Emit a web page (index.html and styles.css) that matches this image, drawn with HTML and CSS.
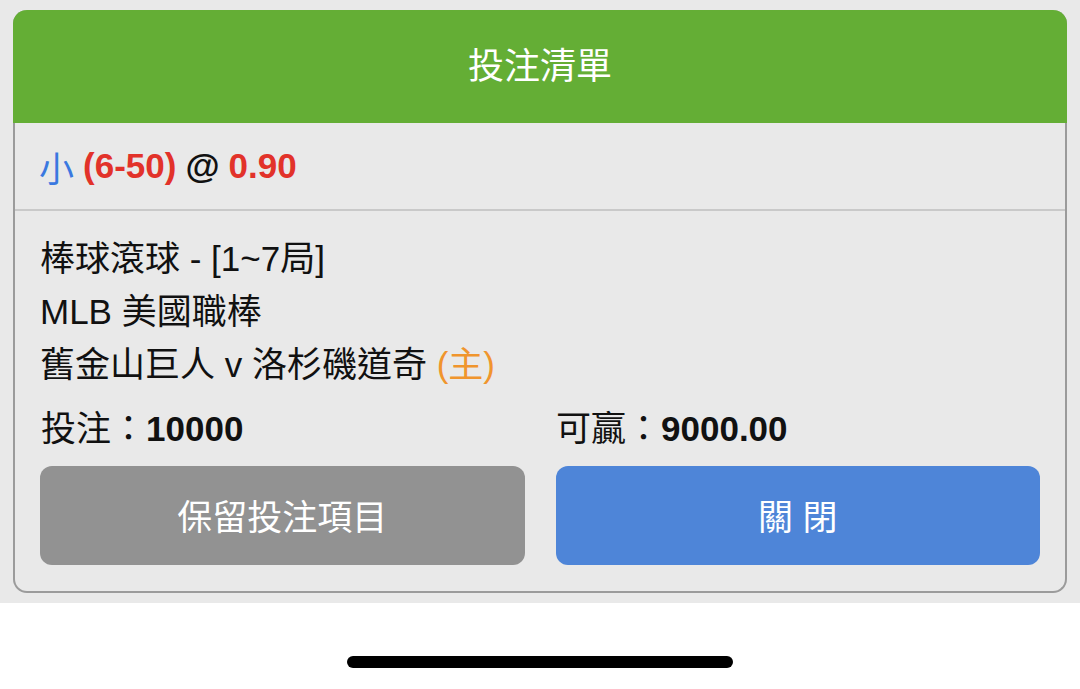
FILE: index.html
```html
<!DOCTYPE html>
<html lang="zh-Hant">
<head>
    <meta charset="UTF-8">
    <meta name="viewport" content="width=device-width, initial-scale=1.0">
    <title>投注清單</title>

    <link rel="stylesheet" href="styles.css">
</head>
<body>

    <div class="sheet">
        <div class="card">

            <div class="card-head">投注清單</div>

            <div class="pick">
                <span class="pick-side">小</span>
                <b class="red">(6-50)</b>
                <b>@</b>
                <b class="red">0.90</b>
            </div>

            <div class="card-body">
                <p class="line">棒球滾球 - [1~7局]</p>
                <p class="line">MLB 美國職棒</p>
                <p class="line">舊金山巨人 v 洛杉磯道奇 <span class="home">(主)</span></p>

                <div class="amounts">
                    <p class="line">投注：<b>10000</b></p>
                    <p class="line">可贏：<b>9000.00</b></p>
                </div>

                <div class="actions">
                    <button class="btn btn-keep">保留投注項目</button>
                    <button class="btn btn-close">關 閉</button>
                </div>
            </div>

        </div>
    </div>

    <div class="homebar">
        <div class="homebar-pill"></div>
    </div>

</body>
</html>
```

FILE: styles.css
```css
body{
    margin: 0;
    background: #ffffff;
    font-family: "Liberation Sans", "Noto Sans CJK TC", sans-serif;
    color: #111111;
}

.sheet{
    background: #e9e9e9;
    padding: 10px 13px 10px;
}

.card{
    border: 2px solid #9b9b9b;
    border-top: none;
    border-radius: 14px;
    background: #e9e9e9;
}

.card-head{
    margin: 0 -2px;
    height: 113px;
    box-sizing: border-box;
    padding-bottom: 8px;
    border-radius: 14px 14px 0 0;
    background: #64ae35;
    color: #ffffff;
    font-size: 36px;
    display: flex;
    align-items: center;
    justify-content: center;
}

.pick{
    height: 86px;
    padding: 0 24px;
    border-bottom: 2px solid #c9c9c9;
    font-size: 35px;
    display: flex;
    align-items: center;
    gap: 9px;
}

.pick-side{
    color: #3a78e0;
}

.red{
    color: #e2322a;
}

.card-body{
    padding: 21px 25px 26px;
}

.line{
    margin: 0;
    font-size: 35px;
    line-height: 53px;
    white-space: nowrap;
}

.home{
    color: #f0952d;
}

.amounts, .actions{
    display: grid;
    grid-template-columns: 1fr 1fr;
    column-gap: 31px;
}

.amounts{
    margin: 11px 0 11px 1px;
}

.btn{
    height: 99px;
    padding-bottom: 4px;
    border: none;
    border-radius: 12px;
    color: #ffffff;
    font-family: "Liberation Sans", "Noto Sans CJK TC", sans-serif;
    font-size: 35px;
}

.btn-keep{
    background: #929292;
}

.btn-close{
    background: #4e85d8;
}

.homebar{
    height: 86px;
    display: flex;
    justify-content: center;
    align-items: flex-start;
}

.homebar-pill{
    width: 386px;
    height: 12px;
    border-radius: 6px;
    background: #000000;
    margin-top: 53px;
}
```
